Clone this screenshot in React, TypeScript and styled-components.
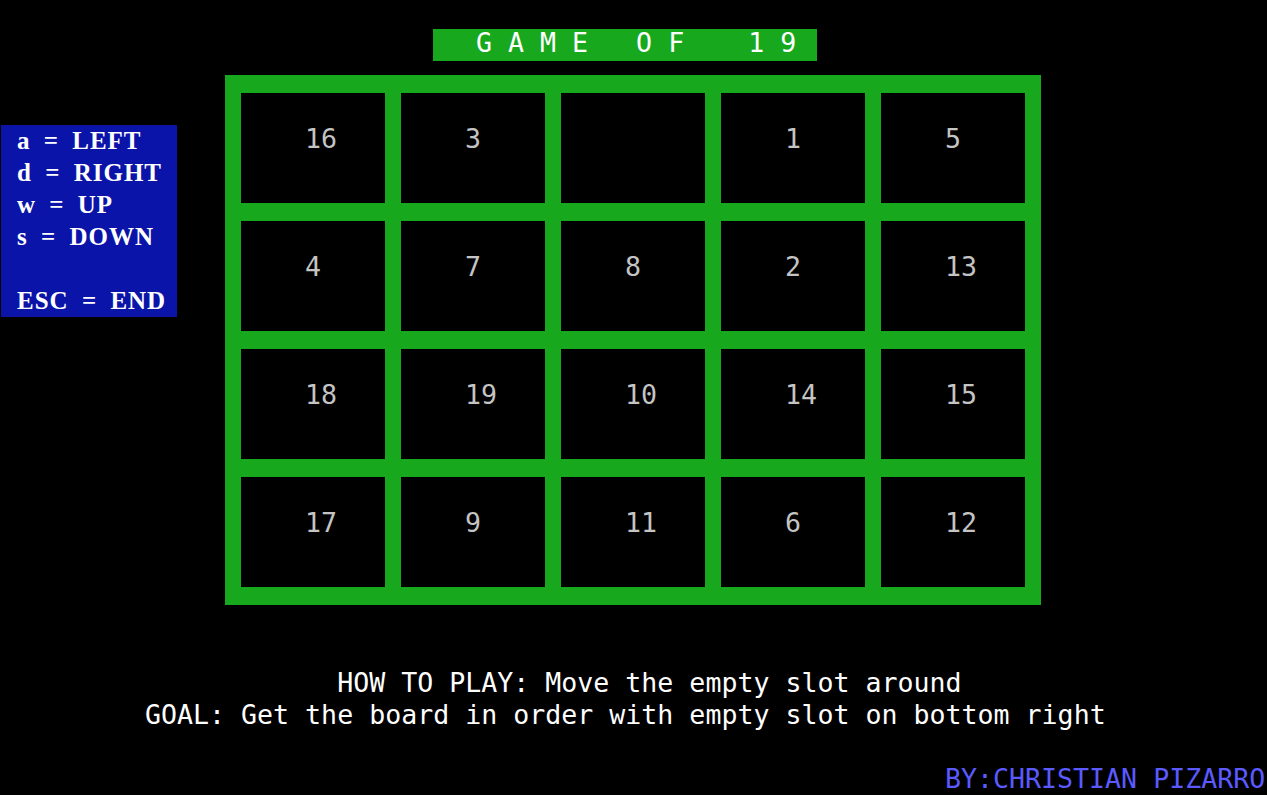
import styled, { createGlobalStyle } from "styled-components";

const GlobalStyle = createGlobalStyle`
  html, body {
    margin: 0;
    padding: 0;
    background: #000;
    overflow: hidden;
  }
`;

const Screen = styled.div`
  width: 1267px;
  height: 795px;
  background: #000;
  display: flex;
  flex-direction: column;
  padding-top: 29px;
  box-sizing: border-box;
  font-family: "DejaVu Sans Mono", monospace;
  font-size: 26.6px;
  line-height: 32px;
  white-space: pre;
`;

const TitleBar = styled.div`
  margin-left: 433px;
  width: 384px;
  height: 32px;
  background: #17a81e;
  color: #fff;
  padding-left: 43px;
  box-sizing: border-box;
  line-height: 28px;
`;

const MainRow = styled.div`
  display: flex;
  align-items: flex-start;
  gap: 48px;
  margin-top: 14px;
  padding-left: 1px;
`;

const KeysPanel = styled.div`
  margin-top: 50px;
  width: 176px;
  height: 192px;
  box-sizing: border-box;
  padding-left: 16px;
  background: #0a14a8;
  color: #fff;
  font-family: "Liberation Serif", serif;
  font-weight: bold;
  font-size: 25px;
  line-height: 32px;
  letter-spacing: 1px;
  word-spacing: 6px;
`;

const Board = styled.div`
  background: #17a81e;
  padding: 18px 16px;
  display: grid;
  grid-template-columns: repeat(5, 144px);
  grid-template-rows: repeat(4, 110px);
  column-gap: 16px;
  row-gap: 18px;
`;

const Cell = styled.div`
  background: #000;
  color: #c4c4c4;
  padding: 30px 0 0 64px;
  box-sizing: border-box;
`;

const HelpText = styled.div`
  margin-top: 62px;
  margin-left: 145px;
  color: #fff;
`;

const Credit = styled.div`
  margin-top: 32px;
  margin-left: 945px;
  color: #5a5aff;
`;

const tiles = [
  16, 3, null, 1, 5,
  4, 7, 8, 2, 13,
  18, 19, 10, 14, 15,
  17, 9, 11, 6, 12,
];

const keys = ["a = LEFT", "d = RIGHT", "w = UP", "s = DOWN", "", "ESC = END"];

export default function App() {
  return (
    <>
      <GlobalStyle />
      <Screen>
        <TitleBar>G A M E   O F    1 9</TitleBar>
        <MainRow>
          <KeysPanel>
            {keys.map((k, i) => (
              <div key={i}>{k || " "}</div>
            ))}
          </KeysPanel>
          <Board>
            {tiles.map((t, i) => (
              <Cell key={i}>{t ?? ""}</Cell>
            ))}
          </Board>
        </MainRow>
        <HelpText>
          <div>{"            HOW TO PLAY: Move the empty slot around"}</div>
          <div>GOAL: Get the board in order with empty slot on bottom right</div>
        </HelpText>
        <Credit>BY:CHRISTIAN PIZARRO</Credit>
      </Screen>
    </>
  );
}
